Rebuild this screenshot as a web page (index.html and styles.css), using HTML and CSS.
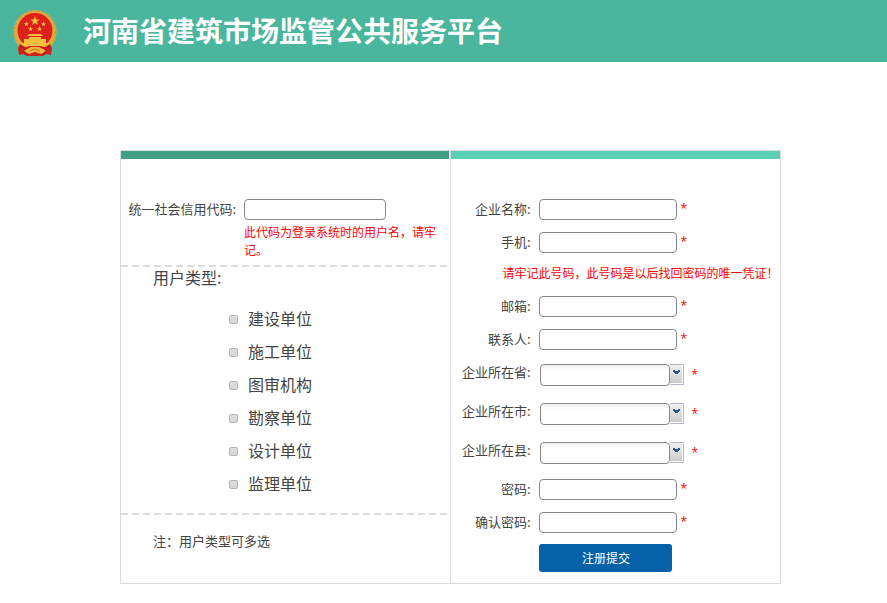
FILE: index.html
```html
<!DOCTYPE html>
<html lang="zh-CN">
<head>
<meta charset="utf-8">
<title>河南省建筑市场监管公共服务平台</title>
<link rel="stylesheet" href="styles.css">
</head>
<body>
<header class="banner">
  <svg class="emblem" viewBox="0 0 44 48" aria-hidden="true">
    <defs>
      <linearGradient id="gold" x1="0" y1="0" x2="0" y2="1"><stop offset="0" stop-color="#dca843"/><stop offset="1" stop-color="#e2ad38"/></linearGradient>
      <path id="star" d="M0-1 .24-.31.95-.31.38.12.59.81 0 .4-.59.81-.38.12-.95-.31-.24-.31Z"/>
    </defs>
    <ellipse cx="22" cy="23" rx="21.500" ry="22" fill="url(#gold)"/>
    <ellipse cx="22" cy="23" rx="20.500" ry="21" fill="none" stroke="#c9943a" stroke-dasharray="2 2"/>
    <ellipse cx="22" cy="21.500" rx="17.500" ry="17.500" fill="#dc211b"/>
    <g fill="#f3bd3d">
      <use href="#star" transform="translate(22 12) scale(5)"/>
      <use href="#star" transform="translate(13.500 15) scale(2.800)"/>
      <use href="#star" transform="translate(30.500 15) scale(2.800)"/>
      <use href="#star" transform="translate(17.500 20) scale(2.800)"/>
      <use href="#star" transform="translate(26.500 20) scale(2.800)"/>
      <path d="M16 25H28L30 27H14ZM16 28H28V30H16ZM11 30H33V34H11ZM7 34H37V37H7Z"/>
    </g>
    <path d="M7 35 12 38H32L37 35 39 39 38 46 33 45 30 47H14L11 45 6 46 5 39Z" fill="#cf211c"/>
    <path d="M7 37 12 40V46M37 37 32 40V46" fill="none" stroke="#a71917"/>
    <path d="M14 40 18 38H26L30 40 33 42 28 45 22 43 16 45 11 42Z" fill="#edb63c"/>
    <path d="M17 42 22 40 27 42" fill="none" stroke="#bf7c22"/>
  </svg>
  <h1 class="title">河南省建筑市场监管公共服务平台</h1>
</header>
<main class="page">
  <form class="panel">
    <section class="side side-user">
      <div class="row code-row">
        <label for="code">统一社会信用代码:</label>
        <input class="field field-code" id="code" type="text">
        <p class="hint code-hint">此代码为登录系统时的用户名，请牢记。</p>
      </div>
      <hr class="rule">
      <fieldset class="types">
        <legend>用户类型:</legend>
        <label class="option"><input type="checkbox"><span>建设单位</span></label>
        <label class="option"><input type="checkbox"><span>施工单位</span></label>
        <label class="option"><input type="checkbox"><span>图审机构</span></label>
        <label class="option"><input type="checkbox"><span>勘察单位</span></label>
        <label class="option"><input type="checkbox"><span>设计单位</span></label>
        <label class="option"><input type="checkbox"><span>监理单位</span></label>
      </fieldset>
      <hr class="rule">
      <p class="note">注：用户类型可多选</p>
    </section>
    <section class="side side-company">
      <div class="row"><label for="company">企业名称:</label><input class="field" id="company" type="text"><span class="star">*</span></div>
      <div class="row"><label for="phone">手机:</label><input class="field" id="phone" type="tel"><span class="star">*</span></div>
      <p class="hint phone-hint">请牢记此号码，此号码是以后找回密码的唯一凭证！</p>
      <div class="row"><label for="mail">邮箱:</label><input class="field" id="mail" type="email"><span class="star">*</span></div>
      <div class="row"><label for="contact">联系人:</label><input class="field" id="contact" type="text"><span class="star">*</span></div>
      <div class="row region"><label for="province">企业所在省:</label><span class="combo"><select id="province"><option></option></select><svg viewBox="0 0 14 21" aria-hidden="true"><use href="#trigger"/></svg></span><span class="star">*</span></div>
      <div class="row region"><label for="city">企业所在市:</label><span class="combo"><select id="city"><option></option></select><svg viewBox="0 0 14 21" aria-hidden="true"><use href="#trigger"/></svg></span><span class="star">*</span></div>
      <div class="row region"><label for="county">企业所在县:</label><span class="combo"><select id="county"><option></option></select><svg viewBox="0 0 14 21" aria-hidden="true"><use href="#trigger"/></svg></span><span class="star">*</span></div>
      <div class="row"><label for="password">密码:</label><input class="field" id="password" type="password"><span class="star">*</span></div>
      <div class="row"><label for="confirm">确认密码:</label><input class="field" id="confirm" type="password"><span class="star">*</span></div>
      <button class="submit" type="submit">注册提交</button>
    </section>
  </form>
</main>
<svg class="symbols" aria-hidden="true">
  <defs>
    <linearGradient id="grey" x1="0" y1="0" x2="0" y2="1"><stop offset="0" stop-color="#f1f1f1"/><stop offset="1" stop-color="#cbcbcb"/></linearGradient>
    <symbol id="trigger" viewBox="0 0 14 21">
      <path d="M0 0H14V21H0Z" fill="#fff"/>
      <path d="M0 1H12V19H0Z" fill="url(#grey)"/>
      <path d="M0 .5H13.500V20.500H0" fill="none" stroke="#b5b8c8"/>
      <path d="M3 6H5V7H8V6H10V8H9V9H8V10H5V9H4V8H3Z" fill="#34548d"/>
    </symbol>
  </defs>
</svg>
</body>
</html>
```
FILE: styles.css
```css
* { box-sizing: border-box; }
body {
  margin: 0;
  background: #fff;
  color: #444;
  font: 13px/20px "Noto Sans CJK SC", sans-serif;
}
p { margin: 0; }
.symbols { display: block; width: 0; height: 0; }
.banner {
  display: flex;
  align-items: center;
  gap: 26px;
  height: 62px;
  padding: 4px 13px 0;
  background: #4ab69e;
}
.emblem { width: 44px; height: 48px; flex: none; }
.title {
  margin: 0;
  padding-bottom: 6px;
  color: #fff;
  font-size: 28px;
  line-height: 40px;
  font-weight: 700;
}
.page { padding: 88px 0 16px 14px; }
.panel {
  display: grid;
  grid-template-columns: 1fr 1fr;
  max-width: 661px;
  margin: 0 auto;
  border: 1px solid #dcdcdc;
}
.side { padding: 34px 0 11px; border-top: 8px solid #5acfb3; }
.side-user {
  border-top: 0;
  padding-top: 0;
  border-right: 1px solid #dcdcdc;
}
.side-user::before {
  content: "";
  display: block;
  height: 8px;
  margin: 0 1px 34px 0;
  background: #449f89;
}
.row {
  display: grid;
  grid-template-columns: 80px auto 1fr;
  column-gap: 8px;
  align-items: center;
  min-height: 33px;
}
.row > label { text-align: right; padding-bottom: 2px; }
.code-row {
  grid-template-columns: 115px 1fr;
  grid-template-rows: 30px auto;
  padding-bottom: 6px;
}
.code-row > label, .field-code { margin-top: 3px; }
.field {
  width: 138px;
  height: 21px;
  padding: 0 4px;
  border: 1px solid #888;
  border-radius: 4px;
  background: #fff;
}
.field-code { width: 142px; }
.hint { color: #f00; font-size: 12px; line-height: 18px; }
.code-hint { grid-column: 2; padding-right: 10px; }
.phone-hint { padding: 5px 0 8px 52px; white-space: nowrap; }
.rule {
  height: 2px;
  margin: 0 1px 0 0;
  border: 0;
  background: repeating-linear-gradient(90deg, #dcdcdc 0 7px, transparent 7px 11px);
}
.types {
  min-width: 0;
  margin: 0;
  padding: 13px 0 13px 108px;
  border: 0;
  font-size: 16px;
}
.types legend { margin-left: -76px; padding: 0 0 2px; line-height: 20px; }
.option { display: flex; align-items: center; gap: 10px; height: 33px; }
.option span { padding-bottom: 2px; }
.option input {
  appearance: none;
  width: 9px;
  height: 9px;
  margin: 2px 0 0;
  border: 1px solid #b5b5b5;
  border-radius: 2px;
  background: linear-gradient(#dedede, #d6d6d6);
}
.option input:checked { background: #449f89; }
.note { padding: 16px 0 0 32px; }
.star { color: #f00; margin-left: -4px; font: 12px/16px "Open Sans", sans-serif; padding-bottom: 2px; }
.region { min-height: 39px; }
.region > label { padding-bottom: 8px; }
.region .star { margin-left: 0; }
.combo { display: flex; margin-left: 1px; padding-bottom: 2px; }
.combo select {
  appearance: none;
  width: 130px;
  height: 22px;
  border: 1px solid #888;
  border-radius: 4px;
  background: linear-gradient(#eef1ee, #fff 6px);
}
.combo svg { width: 14px; height: 21px; }
.submit {
  display: block;
  width: 133px;
  height: 28px;
  margin: 5px 0 0 88px;
  padding: 0 0 0 2px;
  border: 0;
  border-radius: 3px;
  background: #0562a8;
  color: #fff;
  font: 12px/28px "Noto Sans CJK SC", sans-serif;
}
```
